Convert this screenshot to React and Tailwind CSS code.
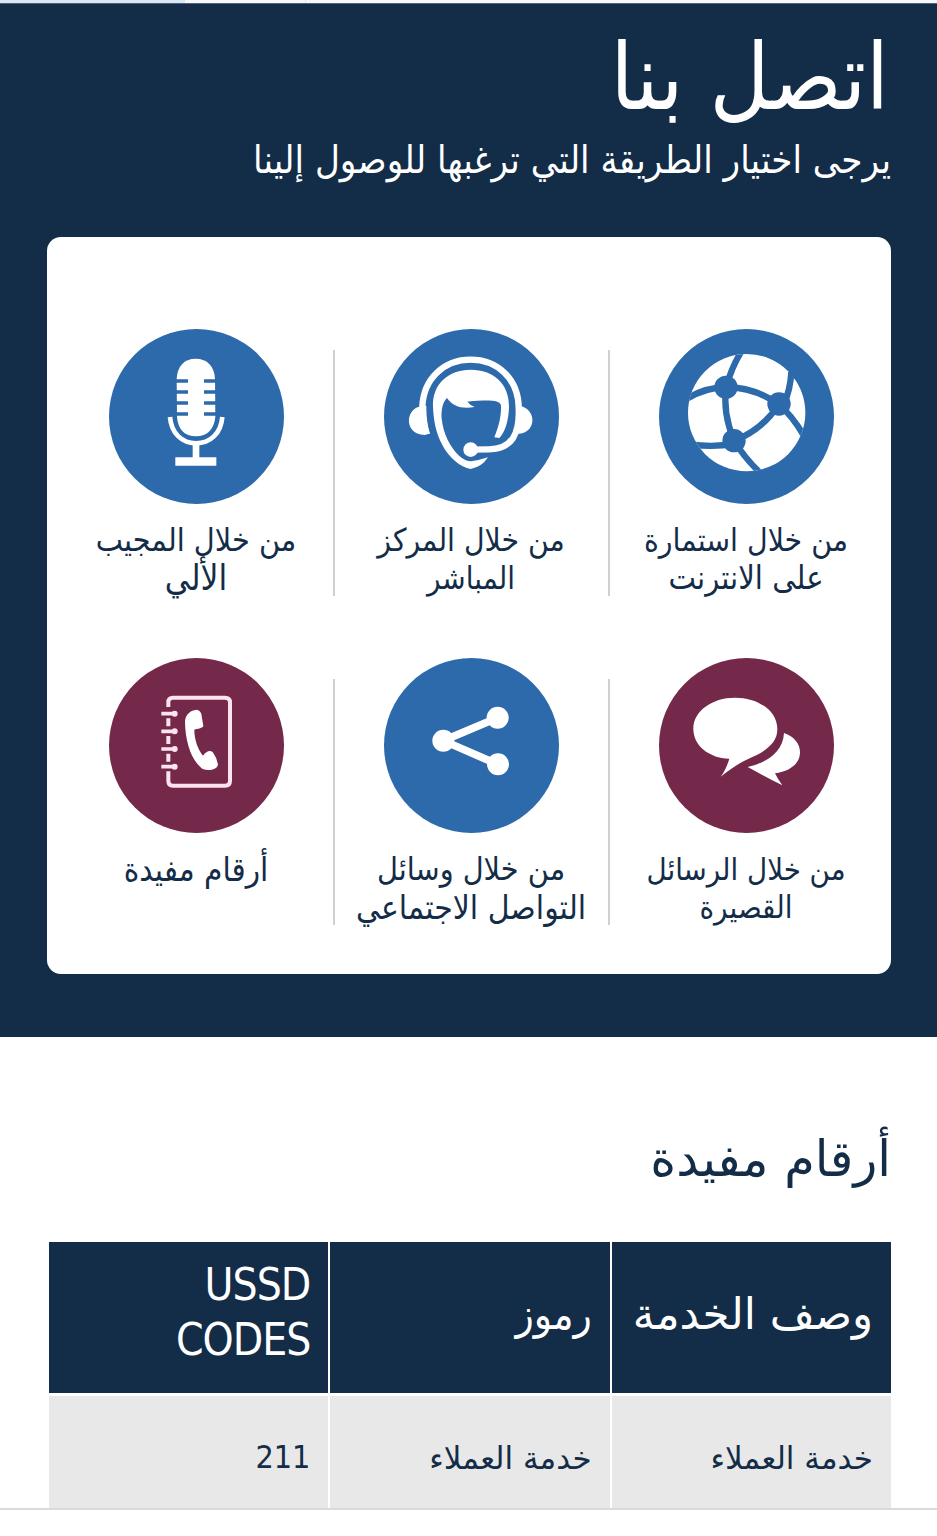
import React from "react";

const GlobeIcon = () => (
  <svg viewBox="56 56 525 525" className="w-full h-full">
    <clipPath id="globe">
      <circle cx="319" cy="307" r="176" />
    </clipPath>
    <circle cx="319" cy="307" r="176" fill="#fff" />
    <g
      clipPath="url(#globe)"
      fill="none"
      stroke="#2d6aab"
      strokeWidth="19"
    >
      <path d="M307 117 Q276 165 258 228" />
      <path d="M135 268 Q190 232 258 230 Q345 232 415 282" />
      <path d="M258 228 Q246 310 282 392" />
      <path d="M415 282 Q370 355 282 392" />
      <path d="M150 402 Q220 412 282 400" />
      <path d="M282 392 Q310 440 362 490" />
      <path d="M430 282 Q450 240 453 185" />
      <path d="M415 282 Q455 315 490 375" />
    </g>
    <path d="M450 165 L500 165 L500 250 L470 212 L446 190 Z" fill="#2d6aab" />
    <g fill="#2d6aab">
      <circle cx="257" cy="231" r="35" />
      <circle cx="416" cy="281" r="35" />
      <circle cx="281" cy="391" r="35" />
    </g>
  </svg>
);

const HeadsetIcon = () => (
  <svg viewBox="56 56 525 525" className="w-full h-full" fill="#fff">
    <path
      d="M184 372 C174 340 171 318 171 290 C174 205 236 148 316 148 C396 148 458 205 460 290 C464 370 440 417 370 417 L318 418"
      fill="none"
      stroke="#fff"
      strokeWidth="19"
    />
    <path d="M170 287 C118 294 118 368 170 373 L194 370 C185 340 183 315 183 287 Z" />
    <path d="M464 287 C514 296 514 366 462 370 L444 370 C452 340 456 315 456 290 Z" />
    <circle cx="316" cy="418" r="22" />
    <path d="M203 290 C200 220 250 178 316 178 C385 178 432 220 431 290 C430 330 420 365 402 383 L387 381 C402 345 408 315 407 285 C402 270 375 268 306 274 Q315 286 328 290 C290 297 262 288 245 263 C232 275 227 300 229 325 C234 370 254 410 282 437 Q300 453 318 453 Q340 450 368 441 Q350 470 316 476 C285 472 250 440 233 408 C211 368 205 330 203 290 Z" />
  </svg>
);

const MicIcon = () => (
  <svg viewBox="55 56 525 525" className="w-full h-full" fill="#fff">
    <path d="M258 205 C260 168 280 145 315 145 C350 145 371 168 373 205 L374 320 C370 357 350 378 316 378 C281 378 262 357 259 320 Z" />
    <path
      d="M250 212 H292 M250 245 H292 M250 278 H292 M250 311 H292 M340 212 H382 M340 245 H382 M340 278 H382 M340 311 H382"
      stroke="#2d6aab"
      strokeWidth="11"
    />
    <path
      d="M238 320 C242 370 275 399 316 399 C358 399 391 370 395 320"
      fill="none"
      stroke="#fff"
      strokeWidth="14"
    />
    <path d="M306 398 H326 V441 H377 V466 H254 V441 H306 Z" />
  </svg>
);

const ChatIcon = () => (
  <svg viewBox="56 54 525 525" className="w-full h-full" fill="#fff">
    <path d="M284 173 C355 173 411 213 411 268 C411 310 375 335 325 356 C295 369 270 388 241 410 Q257 390 267 356 C205 354 159 316 159 266 C159 213 215 173 284 173 Z" />
    <path d="M431 279 C462 290 480 312 479 338 C478 372 448 394 404 400 Q412 417 426 436 C392 420 352 397 322 381 C372 370 428 340 431 279 Z" />
  </svg>
);

const ShareIcon = () => (
  <svg viewBox="101 54 525 525" className="w-full h-full" fill="#fff">
    <path
      d="M442 233 L279 302 L442 373"
      fill="none"
      stroke="#fff"
      strokeWidth="23"
    />
    <circle cx="279" cy="302" r="33" />
    <circle cx="442" cy="233" r="33" />
    <circle cx="443" cy="373" r="33" />
  </svg>
);

const PhoneBookIcon = () => (
  <svg viewBox="55 54 525 525" className="w-full h-full" fill="#fff">
    <path
      d="M233 201 V187 Q233 173 247 173 H403 Q418 173 418 187 V422 Q418 437 403 437 H247 Q233 437 233 422 V394 M233 235 V259 M233 288 V312 M233 341 V365"
      fill="none"
      stroke="#fbe4f0"
      strokeWidth="12"
    />
    <path
      d="M212 221 H254 M212 274 H254 M212 327 H254 M212 380 H254"
      stroke="#fbe4f0"
      strokeWidth="11"
    />
    <g fill="#fbe4f0">
      <circle cx="252" cy="221" r="9" />
      <circle cx="252" cy="274" r="9" />
      <circle cx="252" cy="327" r="9" />
      <circle cx="252" cy="380" r="9" />
    </g>
    <path d="M318 209 Q329 211 332 222 L338 258 C334 266 320 266 311 269 C311 300 322 328 337 347 Q352 327 366 336 Q378 352 382 374 C378 390 354 393 336 387 C303 362 284 308 283 245 C284 222 300 211 318 209 Z" />
  </svg>
);

const channels = [
  {
    icon: GlobeIcon,
    color: "bg-[#2d6aab]",
    lines: [
      { text: "من خلال استمارة", size: "text-[31.6px]" },
      { text: "على الانترنت", size: "text-[32.4px]" },
    ],
  },
  {
    icon: HeadsetIcon,
    color: "bg-[#2d6aab]",
    lines: [
      { text: "من خلال المركز", size: "text-[31.5px]" },
      { text: "المباشر", size: "text-[31px]" },
    ],
  },
  {
    icon: MicIcon,
    color: "bg-[#2d6aab]",
    lines: [
      { text: "من خلال المجيب", size: "text-[32px]" },
      { text: "الألي", size: "text-[35px]" },
    ],
  },
  {
    icon: ChatIcon,
    color: "bg-[#75294a]",
    lines: [
      { text: "من خلال الرسائل", size: "text-[30.8px]" },
      { text: "القصيرة", size: "text-[31px]" },
    ],
  },
  {
    icon: ShareIcon,
    color: "bg-[#2d6aab]",
    lines: [
      { text: "من خلال وسائل", size: "text-[32px]" },
      { text: "التواصل الاجتماعي", size: "text-[33.3px]" },
    ],
  },
  {
    icon: PhoneBookIcon,
    color: "bg-[#75294a]",
    lines: [{ text: "أرقام مفيدة", size: "text-[33px]" }],
  },
];

const Channel = ({ item, divider }) => {
  const Icon = item.icon;
  return (
    <div className="relative flex flex-col items-center">
      <div className={"w-[175px] h-[175px] rounded-full " + item.color}>
        <Icon />
      </div>
      <div className="mt-[18px] text-center whitespace-nowrap">
        {item.lines.map((line) => (
          <p key={line.text} className={"h-[37.5px] leading-[37.5px] " + line.size}>
            {line.text}
          </p>
        ))}
      </div>
      {divider && (
        <div className="absolute -left-px top-[21px] w-0.5 h-[246px] bg-[#d0d0d0]" />
      )}
    </div>
  );
};

const App = () => {
  return (
    <div
      dir="rtl"
      className="w-[937px] h-[1536px] overflow-hidden bg-white text-[#132c47] font-['DejaVu_Sans_Condensed','DejaVu_Sans',sans-serif] [font-stretch:condensed]"
    >
      <div dir="ltr" className="flex h-[3px] bg-[#f7f8f9]">
        <div className="w-[185px] bg-[#d8e8f5]" />
        <div className="w-[121px] border-r border-gray-200" />
      </div>

      <section className="h-[1034px] bg-[#132c47] border-t border-[#536373] pr-[46px] pl-[47px]">
        <h1 className="h-[134px] pt-[24px] pr-[2px] text-[91.5px] leading-[100px] text-white whitespace-nowrap">
          اتصل بنا
        </h1>
        <p className="h-[99px] text-[38.1px] leading-[44px] text-white whitespace-nowrap">
          يرجى اختيار الطريقة التي ترغبها للوصول إلينا
        </p>
        <div className="h-[737px] rounded-[14px] bg-white pt-[92px] pr-[7.5px] pl-[11.5px]">
          <div className="grid grid-cols-3 auto-rows-[329px]">
            {channels.map((item, index) => (
              <Channel key={index} item={item} divider={index % 3 !== 2} />
            ))}
          </div>
        </div>
      </section>

      <section className="h-[471px] pt-[85px] pr-[46px] pl-[49px] overflow-hidden">
        <h2 className="h-[120px] text-[49.4px] leading-[74px] font-['DejaVu_Sans',sans-serif] [font-stretch:normal] whitespace-nowrap">
          أرقام مفيدة
        </h2>
        <div className="grid grid-cols-3 gap-x-0.5 gap-y-[3px]">
          <div className="h-[151px] bg-[#132c47] text-white text-[43.6px] font-['DejaVu_Sans',sans-serif] [font-stretch:normal] px-[18px] pb-1.5 flex items-center whitespace-nowrap">
            وصف الخدمة
          </div>
          <div className="h-[151px] bg-[#132c47] text-white text-[42px] px-[18px] pb-1.5 flex items-center whitespace-nowrap">
            رموز
          </div>
          <div className="h-[151px] bg-[#132c47] text-white text-[44px] leading-[55px] tracking-[-1px] px-[18px] pb-3 flex items-center">
            <span className="w-[140px]">USSD CODES</span>
          </div>
          <div className="h-[115px] bg-[#e8e8e8] text-[31px] leading-[40px] font-['DejaVu_Sans',sans-serif] [font-stretch:normal] px-[18px] pt-[42px] whitespace-nowrap">
            خدمة العملاء
          </div>
          <div className="h-[115px] bg-[#e8e8e8] text-[31px] leading-[40px] font-['DejaVu_Sans',sans-serif] [font-stretch:normal] px-[18px] pt-[42px] whitespace-nowrap">
            خدمة العملاء
          </div>
          <div className="h-[115px] bg-[#e8e8e8] text-[32px] px-[18px] pt-[37px]">
            211
          </div>
        </div>
      </section>
      <div className="h-0.5 bg-[#dadada]" />
    </div>
  );
};

export default App;
